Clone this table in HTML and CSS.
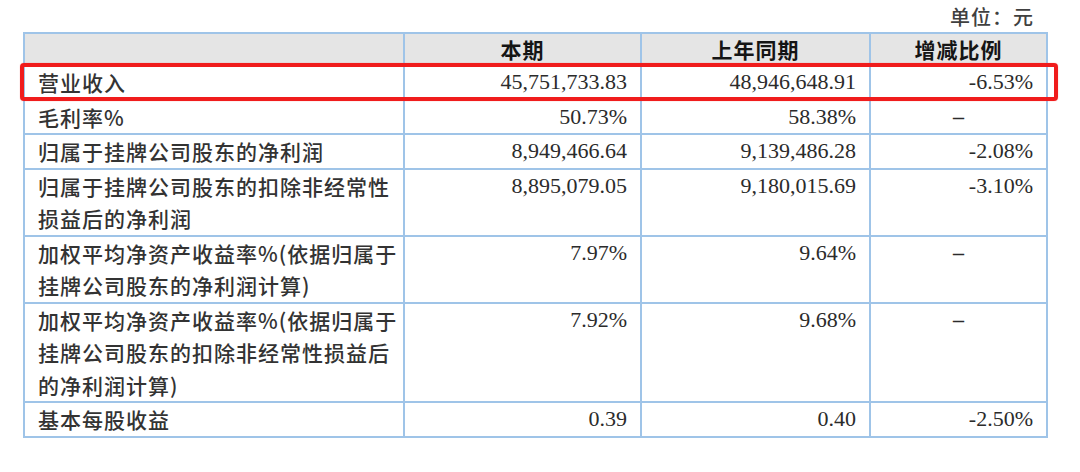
FILE: index.html
```html
<!DOCTYPE html>
<html lang="zh-CN">
<head>
<meta charset="utf-8">
<title>主要财务数据</title>
<link rel="stylesheet" href="styles.css">
</head>
<body>
<div class="page">
  <div class="unit">单位：元</div>
  <div class="table-wrap">
    <table class="fin">
      <colgroup>
        <col class="c1"><col class="c2"><col class="c3"><col class="c4">
      </colgroup>
      <thead>
        <tr>
          <th></th>
          <th>本期</th>
          <th>上年同期</th>
          <th>增减比例</th>
        </tr>
      </thead>
      <tbody>
        <tr>
          <td class="label">营业收入</td>
          <td class="num">45,751,733.83</td>
          <td class="num">48,946,648.91</td>
          <td class="num">-6.53%</td>
        </tr>
        <tr>
          <td class="label">毛利率%</td>
          <td class="num">50.73%</td>
          <td class="num">58.38%</td>
          <td class="dash">–</td>
        </tr>
        <tr>
          <td class="label">归属于挂牌公司股东的净利润</td>
          <td class="num">8,949,466.64</td>
          <td class="num">9,139,486.28</td>
          <td class="num">-2.08%</td>
        </tr>
        <tr>
          <td class="label">归属于挂牌公司股东的扣除非经常性<br>损益后的净利润</td>
          <td class="num">8,895,079.05</td>
          <td class="num">9,180,015.69</td>
          <td class="num">-3.10%</td>
        </tr>
        <tr>
          <td class="label">加权平均净资产收益率%(依据归属于<br>挂牌公司股东的净利润计算)</td>
          <td class="num">7.97%</td>
          <td class="num">9.64%</td>
          <td class="dash">–</td>
        </tr>
        <tr>
          <td class="label">加权平均净资产收益率%(依据归属于<br>挂牌公司股东的扣除非经常性损益后<br>的净利润计算)</td>
          <td class="num">7.92%</td>
          <td class="num">9.68%</td>
          <td class="dash">–</td>
        </tr>
        <tr>
          <td class="label">基本每股收益</td>
          <td class="num">0.39</td>
          <td class="num">0.40</td>
          <td class="num">-2.50%</td>
        </tr>
      </tbody>
    </table>
    <div class="highlight"></div>
  </div>
</div>
</body>
</html>
```

FILE: styles.css
```css
html, body {
  margin: 0;
  padding: 0;
  background: #ffffff;
}

.page {
  width: 1023px;
  padding: 2px 0 0 23px;
  color: #333333;
}

.unit {
  height: 30px;
  line-height: 30px;
  text-align: right;
  padding-right: 12px;
  font-family: "Noto Sans CJK SC", sans-serif;
  font-size: 20px;
  font-weight: 500;
  letter-spacing: 1px;
  color: #404040;
}

.table-wrap {
  position: relative;
}

.fin {
  width: 1023px;
  table-layout: fixed;
  border-collapse: collapse;
  font-family: "Liberation Serif", "Noto Sans CJK SC", serif;
}

.c1 { width: 380px; }
.c2 { width: 237px; }
.c3 { width: 229px; }
.c4 { width: 177px; }

.fin th,
.fin td {
  border: 2px solid #9fc4e8;
  padding: 0 13px;
  vertical-align: top;
  white-space: nowrap;
}

.fin th {
  background: #e5e5e5;
  height: 30px;
  line-height: 30px;
  font-family: "Noto Sans CJK SC", sans-serif;
  font-size: 21px;
  font-weight: 700;
  color: #151515;
  text-align: center;
  letter-spacing: 1px;
}

.fin td {
  line-height: 32.5px;
}

.label {
  font-family: "Noto Sans CJK SC", sans-serif;
  font-size: 21px;
  font-weight: 500;
  letter-spacing: 1px;
  color: #333333;
}

.num {
  font-size: 22px;
  text-align: right;
  color: #2b2b2b;
}

.dash {
  font-size: 22px;
  font-weight: 700;
  text-align: center;
  color: #2b2b2b;
}

.highlight {
  position: absolute;
  left: -3px;
  top: 31px;
  width: 1038px;
  height: 38px;
  box-sizing: border-box;
  border: 4px solid #f01c1c;
  border-radius: 4px;
  box-shadow: 0 0 1px rgba(240, 28, 28, 0.6);
  pointer-events: none;
}
```
